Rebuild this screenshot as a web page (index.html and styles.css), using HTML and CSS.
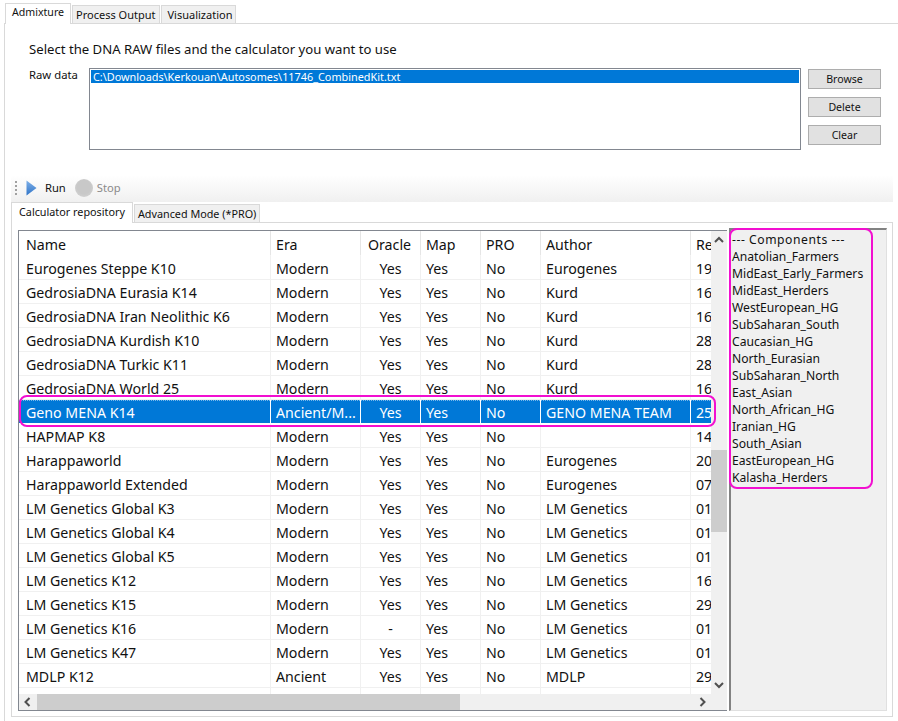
FILE: index.html
```html
<!DOCTYPE html>
<html lang="en">
<head>
<meta charset="utf-8">
<title>Admixture</title>
<link rel="stylesheet" href="styles.css">
</head>
<body>
<div class="app">
  <div class="tabs">
    <div class="tab active">Admixture</div>
    <div class="tab">Process Output</div>
    <div class="tab">Visualization</div>
  </div>
  <div class="main-pane">
    <p class="prompt">Select the DNA RAW files and the calculator you want to use</p>
    <div class="form-row">
      <label class="raw-label">Raw data</label>
      <div class="listbox"><div class="list-sel">C:\Downloads\Kerkouan\Autosomes\11746_CombinedKit.txt</div></div>
      <div class="buttons">
        <button class="btn">Browse</button>
        <button class="btn">Delete</button>
        <button class="btn">Clear</button>
      </div>
    </div>
    <div class="toolbar">
      <span class="grip"></span>
      <svg class="run-icon" width="11" height="16" viewBox="0 0 11 16"><defs><linearGradient id="runfill" x1="0" y1="0" x2="0" y2="1"><stop offset="0" stop-color="#7fb0e8"/><stop offset="1" stop-color="#2f74c8"/></linearGradient></defs><path d="M0.5 0.5 L10.5 8 L0.5 15.5 Z" fill="url(#runfill)"/></svg>
      <span class="tool-text">Run</span>
      <span class="stop-icon"></span>
      <span class="tool-text disabled">Stop</span>
    </div>
    <div class="tabs inner-tabs">
      <div class="tab active">Calculator repository</div>
      <div class="tab">Advanced Mode (*PRO)</div>
    </div>
    <div class="inner-pane">
      <div class="table-box">
        <div class="table-clip">
          <table class="grid">
            <colgroup><col class="c-name"><col class="c-era"><col class="c-s"><col class="c-s"><col class="c-s"><col class="c-author"><col class="c-re"></colgroup>
            <thead>
              <tr><th>Name</th><th>Era</th><th class="ctr">Oracle</th><th>Map</th><th>PRO</th><th>Author</th><th>Release</th></tr>
            </thead>
            <tbody>
              <tr><td>Eurogenes Steppe K10</td><td>Modern</td><td class="ctr">Yes</td><td>Yes</td><td>No</td><td>Eurogenes</td><td>19</td></tr>
              <tr><td>GedrosiaDNA Eurasia K14</td><td>Modern</td><td class="ctr">Yes</td><td>Yes</td><td>No</td><td>Kurd</td><td>16</td></tr>
              <tr><td>GedrosiaDNA Iran Neolithic K6</td><td>Modern</td><td class="ctr">Yes</td><td>Yes</td><td>No</td><td>Kurd</td><td>16</td></tr>
              <tr><td>GedrosiaDNA Kurdish K10</td><td>Modern</td><td class="ctr">Yes</td><td>Yes</td><td>No</td><td>Kurd</td><td>28</td></tr>
              <tr><td>GedrosiaDNA Turkic K11</td><td>Modern</td><td class="ctr">Yes</td><td>Yes</td><td>No</td><td>Kurd</td><td>28</td></tr>
              <tr><td>GedrosiaDNA World 25</td><td>Modern</td><td class="ctr">Yes</td><td>Yes</td><td>No</td><td>Kurd</td><td>16</td></tr>
              <tr class="selected"><td>Geno MENA K14</td><td>Ancient/M...</td><td class="ctr">Yes</td><td>Yes</td><td>No</td><td>GENO MENA TEAM</td><td>25</td></tr>
              <tr><td>HAPMAP K8</td><td>Modern</td><td class="ctr">Yes</td><td>Yes</td><td>No</td><td></td><td>14</td></tr>
              <tr><td>Harappaworld</td><td>Modern</td><td class="ctr">Yes</td><td>Yes</td><td>No</td><td>Eurogenes</td><td>20</td></tr>
              <tr><td>Harappaworld Extended</td><td>Modern</td><td class="ctr">Yes</td><td>Yes</td><td>No</td><td>Eurogenes</td><td>07</td></tr>
              <tr><td>LM Genetics Global K3</td><td>Modern</td><td class="ctr">Yes</td><td>Yes</td><td>No</td><td>LM Genetics</td><td>01</td></tr>
              <tr><td>LM Genetics Global K4</td><td>Modern</td><td class="ctr">Yes</td><td>Yes</td><td>No</td><td>LM Genetics</td><td>01</td></tr>
              <tr><td>LM Genetics Global K5</td><td>Modern</td><td class="ctr">Yes</td><td>Yes</td><td>No</td><td>LM Genetics</td><td>01</td></tr>
              <tr><td>LM Genetics K12</td><td>Modern</td><td class="ctr">Yes</td><td>Yes</td><td>No</td><td>LM Genetics</td><td>16</td></tr>
              <tr><td>LM Genetics K15</td><td>Modern</td><td class="ctr">Yes</td><td>Yes</td><td>No</td><td>LM Genetics</td><td>29</td></tr>
              <tr><td>LM Genetics K16</td><td>Modern</td><td class="ctr">-</td><td>Yes</td><td>No</td><td>LM Genetics</td><td>01</td></tr>
              <tr><td>LM Genetics K47</td><td>Modern</td><td class="ctr">Yes</td><td>Yes</td><td>No</td><td>LM Genetics</td><td>01</td></tr>
              <tr><td>MDLP K12</td><td>Ancient</td><td class="ctr">Yes</td><td>Yes</td><td>No</td><td>MDLP</td><td>29</td></tr>
              <tr><td>&nbsp;</td><td></td><td></td><td></td><td></td><td></td><td></td></tr>
            </tbody>
          </table>
        </div>
        <div class="vscroll">
          <svg class="arrow" width="16" height="17" viewBox="0 0 16 17"><path d="M4 11 L8 7 L12 11" fill="none" stroke="#505050" stroke-width="2"/></svg>
          <div class="vtrack"><div class="vthumb"></div></div>
          <svg class="arrow" width="16" height="17" viewBox="0 0 16 17"><path d="M4 6 L8 10 L12 6" fill="none" stroke="#505050" stroke-width="2"/></svg>
        </div>
        <div class="hscroll">
          <svg class="arrow" width="18" height="15" viewBox="0 0 18 15"><path d="M10.5 4 L6.5 8 L10.5 12" fill="none" stroke="#505050" stroke-width="2"/></svg>
          <div class="hthumb"></div>
          <div class="htrack"></div>
          <svg class="arrow" width="17" height="15" viewBox="0 0 17 15"><path d="M6.5 4 L10.5 8 L6.5 12" fill="none" stroke="#505050" stroke-width="2"/></svg>
        </div>
        <div class="corner"></div>
        <div class="mark mark-row"></div>
      </div>
      <div class="components">
        <div class="comp-list">
          <div class="comp-head">--- Components ---</div>
          <div>Anatolian_Farmers</div>
          <div>MidEast_Early_Farmers</div>
          <div>MidEast_Herders</div>
          <div>WestEuropean_HG</div>
          <div>SubSaharan_South</div>
          <div>Caucasian_HG</div>
          <div>North_Eurasian</div>
          <div>SubSaharan_North</div>
          <div>East_Asian</div>
          <div>North_African_HG</div>
          <div>Iranian_HG</div>
          <div>South_Asian</div>
          <div>EastEuropean_HG</div>
          <div>Kalasha_Herders</div>
        </div>
        <div class="mark mark-comp"></div>
      </div>
    </div>
  </div>
</div>
</body>
</html>
```
FILE: styles.css
```css
* { box-sizing: border-box; }
html, body { margin: 0; padding: 0; }
body {
  width: 898px;
  height: 721px;
  overflow: hidden;
  background: #fff;
  color: #111;
  font-family: "Noto Sans", "Open Sans", sans-serif;
  font-size: 12px;
}
.app {
  display: flex;
  flex-direction: column;
  height: 721px;
  padding: 3px 0 0 4px;
}
.tabs {
  display: flex;
  align-items: flex-end;
  height: 20px;
  padding-left: 1px;
  gap: 1px;
  position: relative;
  z-index: 1;
  flex: none;
}
.tab {
  height: 18px;
  line-height: 17px;
  padding: 0 4px 0 3px;
  font-size: 11px;
  background: #f0f0f0;
  border: 1px solid #d9d9d9;
  border-bottom: none;
  white-space: nowrap;
}
.tab:nth-child(3) { padding: 0 3px 0 5px; }
.tab.active {
  height: 21px;
  margin-bottom: -1px;
  line-height: 17px;
  padding: 0 6px;
  font-size: 10.6px;
  background: #fff;
}
.main-pane {
  flex: 1;
  border-top: 1px solid #d9d9d9;
  border-left: 1px solid #d9d9d9;
  min-height: 0;
}
.prompt {
  margin: 16px 0 10px 24px;
  font-size: 13.15px;
  line-height: 18px;
}
.form-row {
  display: flex;
  align-items: flex-start;
  padding-left: 24px;
}
.raw-label {
  width: 60px;
  flex: none;
  font-size: 11.3px;
  line-height: 14px;
}
.listbox {
  width: 712px;
  height: 82px;
  flex: none;
  border: 1px solid #828790;
  padding: 1px;
}
.list-sel {
  height: 13px;
  line-height: 13px;
  padding-left: 2px;
  font-size: 10.85px;
  background: #0078d7;
  color: #fff;
}
.buttons {
  display: flex;
  flex-direction: column;
  gap: 8px;
  margin-left: 7px;
  padding-top: 1px;
}
.btn {
  width: 73px;
  height: 20px;
  padding: 0;
  font: 10.6px "Noto Sans", "Open Sans", sans-serif;
  color: #111;
  background: #e1e1e1;
  border: 1px solid #adadad;
}
.toolbar {
  display: flex;
  align-items: center;
  height: 27px;
  width: 882px;
  margin: 25px 0 0 6px;
  padding: 0 0 2px 4px;
  background: linear-gradient(#ffffff, #f0f0f0);
}
.grip {
  width: 2px;
  height: 14px;
  margin-right: 9px;
  background: repeating-linear-gradient(#a0a0a0 0 2px, transparent 2px 4px);
}
.run-icon { margin-right: 8px; flex: none; }
.tool-text { font-size: 11.2px; }
.tool-text.disabled { color: #8a8a8a; }
.stop-icon {
  width: 18px;
  height: 18px;
  margin: 0 4px 0 9px;
  border-radius: 50%;
  background: radial-gradient(circle at 50% 45%, #c8c8c8 50%, #d8d8d8 100%);
}
.inner-tabs { margin-left: 6px; padding-left: 0; }
.inner-tabs .tab { padding: 0 3px; font-size: 10.8px; }
.inner-tabs .tab.active { padding: 0 7px; font-size: 10.8px; }
.inner-pane {
  display: flex;
  align-items: flex-start;
  gap: 2px;
  width: 882px;
  height: 495px;
  margin-left: 6px;
  padding-left: 6px;
  border: 1px solid #d9d9d9;
}
.table-box {
  position: relative;
  display: grid;
  grid-template-columns: 692px 16px;
  grid-template-rows: 463px 16px;
  width: 709px;
  height: 481px;
  margin-top: 7px;
  border: 1px solid #828790;
  border-right: none;
  flex: none;
}
.table-clip { overflow: hidden; background: #fff; }
.grid {
  border-collapse: separate;
  border-spacing: 0;
  table-layout: fixed;
  width: 772px;
  font-size: 14.2px;
}
.c-name { width: 252px; }
.c-era { width: 90px; }
.c-s { width: 60px; }
.c-author { width: 150px; }
.c-re { width: 100px; }
.grid th, .grid td {
  height: 24px;
  padding: 1px 0 0 5px;
  text-align: left;
  font-weight: 400;
  white-space: nowrap;
  overflow: hidden;
  border-right: 1px solid #f0f0f0;
  border-bottom: 1px solid #f0f0f0;
}
.grid th:first-child, .grid td:first-child { padding-left: 7px; }
.grid th {
  height: 25px;
  padding-top: 3px;
  border-color: #e5e5e5;
  border-bottom-color: #fff;
}
.grid .ctr { text-align: center; padding-left: 0; }
.grid th.ctr { padding-right: 2px; }
.selected td {
  color: #fff;
  border-right-color: #fff;
  border-bottom-color: #fff;
  background-color: #0078d7;
  background-image: repeating-linear-gradient(90deg, #7ab8ea 0 1px, #0078d7 1px 2px);
  background-size: 100% 1px;
  background-repeat: no-repeat;
}
.vscroll {
  display: flex;
  flex-direction: column;
  background: #f0f0f0;
}
.vtrack { flex: 1; padding-top: 202px; }
.vthumb { height: 82px; background: #cdcdcd; }
.hscroll { display: flex; background: #f0f0f0; }
.hthumb { width: 423px; background: #cdcdcd; }
.htrack { flex: 1; }
.corner { background: #f0f0f0; }
.arrow { display: block; flex: none; }
.components {
  position: relative;
  width: 158px;
  height: 483px;
  margin-top: 5px;
  background: #f0f0f0;
  border-top: 2px solid #828282;
  border-left: 2px solid #828282;
  border-right: 1px solid #e0e0e0;
  border-bottom: 1px solid #e0e0e0;
  flex: none;
}
.comp-list {
  padding: 1px 0 0 1px;
  font-size: 12.15px;
  line-height: 17px;
}
.comp-head { letter-spacing: 0.55px; }
.mark {
  position: absolute;
  border: 2px solid #f20fd0;
  border-radius: 8px;
  pointer-events: none;
}
.mark-row { left: 0; top: 164px; width: 697px; height: 32px; }
.mark-comp { left: -2px; top: -2px; width: 144px; height: 261px; }
```
